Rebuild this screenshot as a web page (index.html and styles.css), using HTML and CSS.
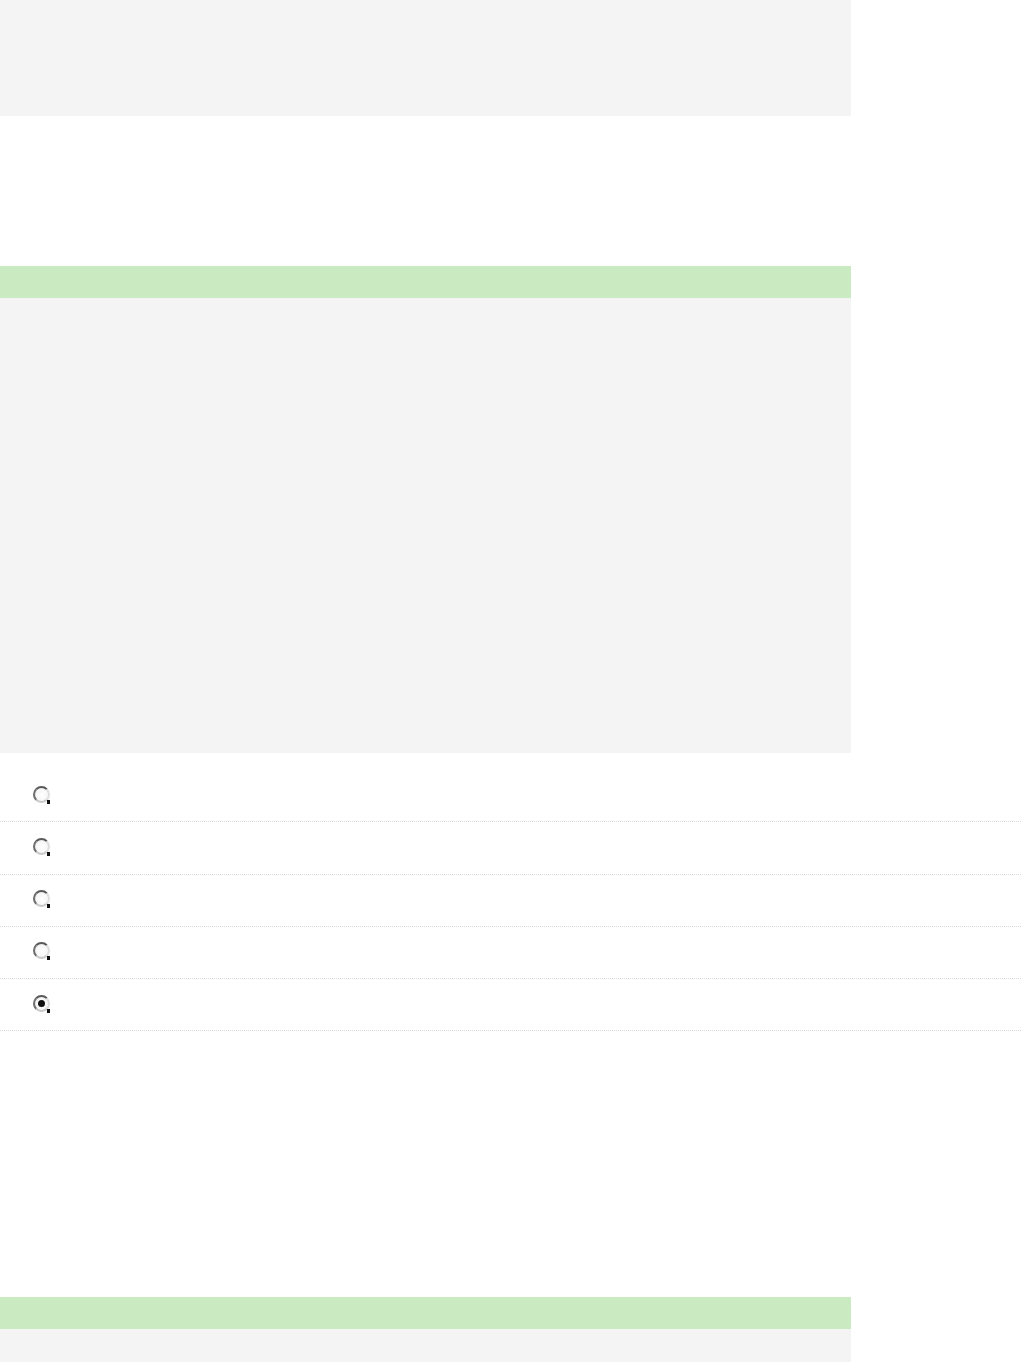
FILE: index.html
```html
<!DOCTYPE html>
<html>
<head>
<meta charset="utf-8">
<link rel="stylesheet" href="styles.css">
</head>
<body>
<div class="page">
  <div class="panel panel-top"></div>
  <section class="block block-first">
    <div class="bar"></div>
    <div class="panel panel-large"></div>
  </section>
  <ul class="options">
    <li class="option"><span class="radio"></span></li>
    <li class="option"><span class="radio"></span></li>
    <li class="option"><span class="radio"></span></li>
    <li class="option"><span class="radio"></span></li>
    <li class="option"><span class="radio checked"></span></li>
  </ul>
  <section class="block block-second">
    <div class="bar"></div>
    <div class="panel panel-bottom"></div>
  </section>
</div>
</body>
</html>
```

FILE: styles.css
```css
html, body {
  margin: 0;
  padding: 0;
  background: #ffffff;
  font-family: "Liberation Sans", Arial, sans-serif;
}
.page {
  display: flex;
  flex-direction: column;
  width: 1021px;
  height: 1362px;
  overflow: hidden;
}
.page > * {
  flex-shrink: 0;
}
.panel {
  width: 851px;
  background: #f4f4f4;
}
.panel-top {
  height: 116px;
}
.block {
  display: flex;
  flex-direction: column;
}
.block-first {
  margin-top: 150px;
}
.bar {
  width: 851px;
  height: 32px;
  background: #caeac2;
}
.panel-large {
  height: 455px;
}
.options {
  list-style: none;
  margin: 17px 0 0 0;
  padding: 0;
  width: 1021px;
}
.option {
  display: flex;
  align-items: center;
  height: 51.25px;
  border-bottom: 1px dotted #d8d8d8;
  padding-left: 33px;
  box-sizing: content-box;
}
.radio {
  position: relative;
  display: inline-block;
  width: 13px;
  height: 13px;
  border-radius: 50%;
  border: 2px solid #6e6e6e;
  border-top-color: #5a5a5a;
  border-right-color: #dedede;
  border-bottom-color: #c8c8c8;
  background: radial-gradient(circle at 55% 55%, #ffffff 0%, #f7f7f7 55%, #e4e4e4 100%);
  margin-top: -3px;
}
.radio::after {
  content: "";
  position: absolute;
  right: -2px;
  bottom: -3px;
  width: 3px;
  height: 4px;
  background: #111;
}
.radio.checked::before {
  content: "";
  position: absolute;
  left: 3px;
  top: 3px;
  width: 7px;
  height: 7px;
  border-radius: 50%;
  background: #111;
}
.block-second {
  margin-top: 266px;
}
.panel-bottom {
  height: 40px;
}
```
